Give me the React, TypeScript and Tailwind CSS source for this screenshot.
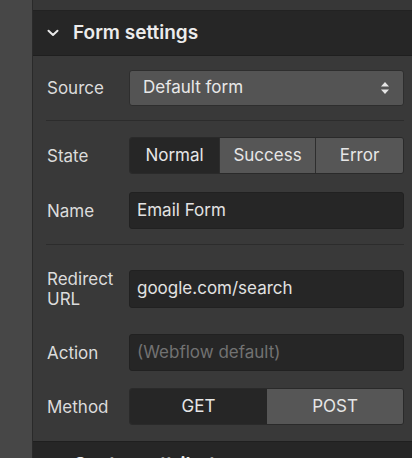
import React from 'react';

const font = "font-['Inter','Noto_Sans',sans-serif]";

function Chevron() {
    return (
        <svg width="12" height="8" viewBox="0 0 12 8" className="shrink-0">
            <path d="M1.5 1.8 L6 6 L10.5 1.8" fill="none" stroke="#e8e8e8" strokeWidth="2" strokeLinecap="round" strokeLinejoin="round" />
        </svg>
    );
}

function Row({ label, children, className = '' }: { label: React.ReactNode; children: React.ReactNode; className?: string }) {
    return (
        <div className={`flex items-center ${className}`}>
            <div className="w-[82px] shrink-0 text-[17px] leading-[20px] text-[#dcdcdc]">{label}</div>
            <div className="flex-1 h-full">{children}</div>
        </div>
    );
}

function TextBox({ value, placeholder }: { value?: string; placeholder?: string }) {
    return (
        <div className="h-full flex items-center rounded-[3px] bg-[#262626] border border-[#212121] px-[7px] text-[17px]">
            {value ? <span className="text-[#e2e2e2]">{value}</span> : <span className="text-[#727272]">{placeholder}</span>}
        </div>
    );
}

export default function App() {
    return (
        <div className={`flex w-[412px] h-[458px] overflow-hidden bg-[#393939] ${font}`}>
            {/* left rail */}
            <div className="w-[33px] shrink-0 bg-[#474747] border-r border-[#2a2a2a]" />

            <div className="flex-1 flex flex-col">
                <div className="h-[11px] shrink-0 bg-[#373737] border-b border-[#222222]" />

                {/* section header */}
                <div className="h-[45px] shrink-0 flex items-center gap-[14px] pl-[14px] bg-[#262626] border-b border-[#1f1f1f]">
                    <Chevron />
                    <span className="text-[19px] font-semibold text-[#ececec]">Form settings</span>
                </div>

                <div className="pl-[14px] pr-[8px]">
                    <Row label="Source" className="mt-[14px] h-[36px]">
                        <div className="h-full flex items-center justify-between rounded-[3px] bg-[#545454] border border-[#2e2e2e] pl-[13px] pr-[13px] text-[17px] text-[#e8e8e8]">
                            <span>Default form</span>
                            <svg width="10" height="14" viewBox="0 0 10 14">
                                <path d="M5 1 L9 5.5 L1 5.5 Z" fill="#e6e6e6" />
                                <path d="M5 13 L9 8.5 L1 8.5 Z" fill="#e6e6e6" />
                            </svg>
                        </div>
                    </Row>

                    <div className="mt-[14px] h-px bg-[#2c2c2c] -ml-px" />

                    <Row label="State" className="mt-[16px] h-[37px]">
                        <div className="h-full flex rounded-[3px] overflow-hidden border border-[#2a2a2a] text-[17px] text-[#e6e6e6]">
                            <div className="w-[89px] flex items-center justify-center bg-[#262626]">Normal</div>
                            <div className="w-[96px] flex items-center justify-center bg-[#565656] border-l border-[#2e2e2e]">Success</div>
                            <div className="flex-1 flex items-center justify-center bg-[#565656] border-l border-[#2e2e2e]">Error</div>
                        </div>
                    </Row>

                    <Row label="Name" className="mt-[18px] h-[37px]">
                        <TextBox value="Email Form" />
                    </Row>

                    <div className="mt-[15px] h-px bg-[#2c2c2c] -ml-px" />

                    <Row label={<>Redirect<br />URL</>} className="mt-[25px] h-[38px]">
                        <TextBox value="google.com/search" />
                    </Row>

                    <Row label="Action" className="mt-[26px] h-[37px]">
                        <TextBox placeholder="(Webflow default)" />
                    </Row>

                    <Row label="Method" className="mt-[17px] h-[37px]">
                        <div className="h-full flex rounded-[3px] overflow-hidden border border-[#2a2a2a] text-[17px] text-[#e6e6e6]">
                            <div className="w-[137px] flex items-center justify-center bg-[#262626]">GET</div>
                            <div className="flex-1 flex items-center justify-center bg-[#565656]">POST</div>
                        </div>
                    </Row>
                </div>

                <div className="mt-[16px] shrink-0 h-[45px] flex items-center gap-[14px] pl-[14px] pt-[2px] bg-[#262626] border-t border-[#1f1f1f]">
                    <Chevron />
                    <span className="text-[19px] font-semibold text-[#ececec]">Custom attributes</span>
                </div>
            </div>
        </div>
    );
}
